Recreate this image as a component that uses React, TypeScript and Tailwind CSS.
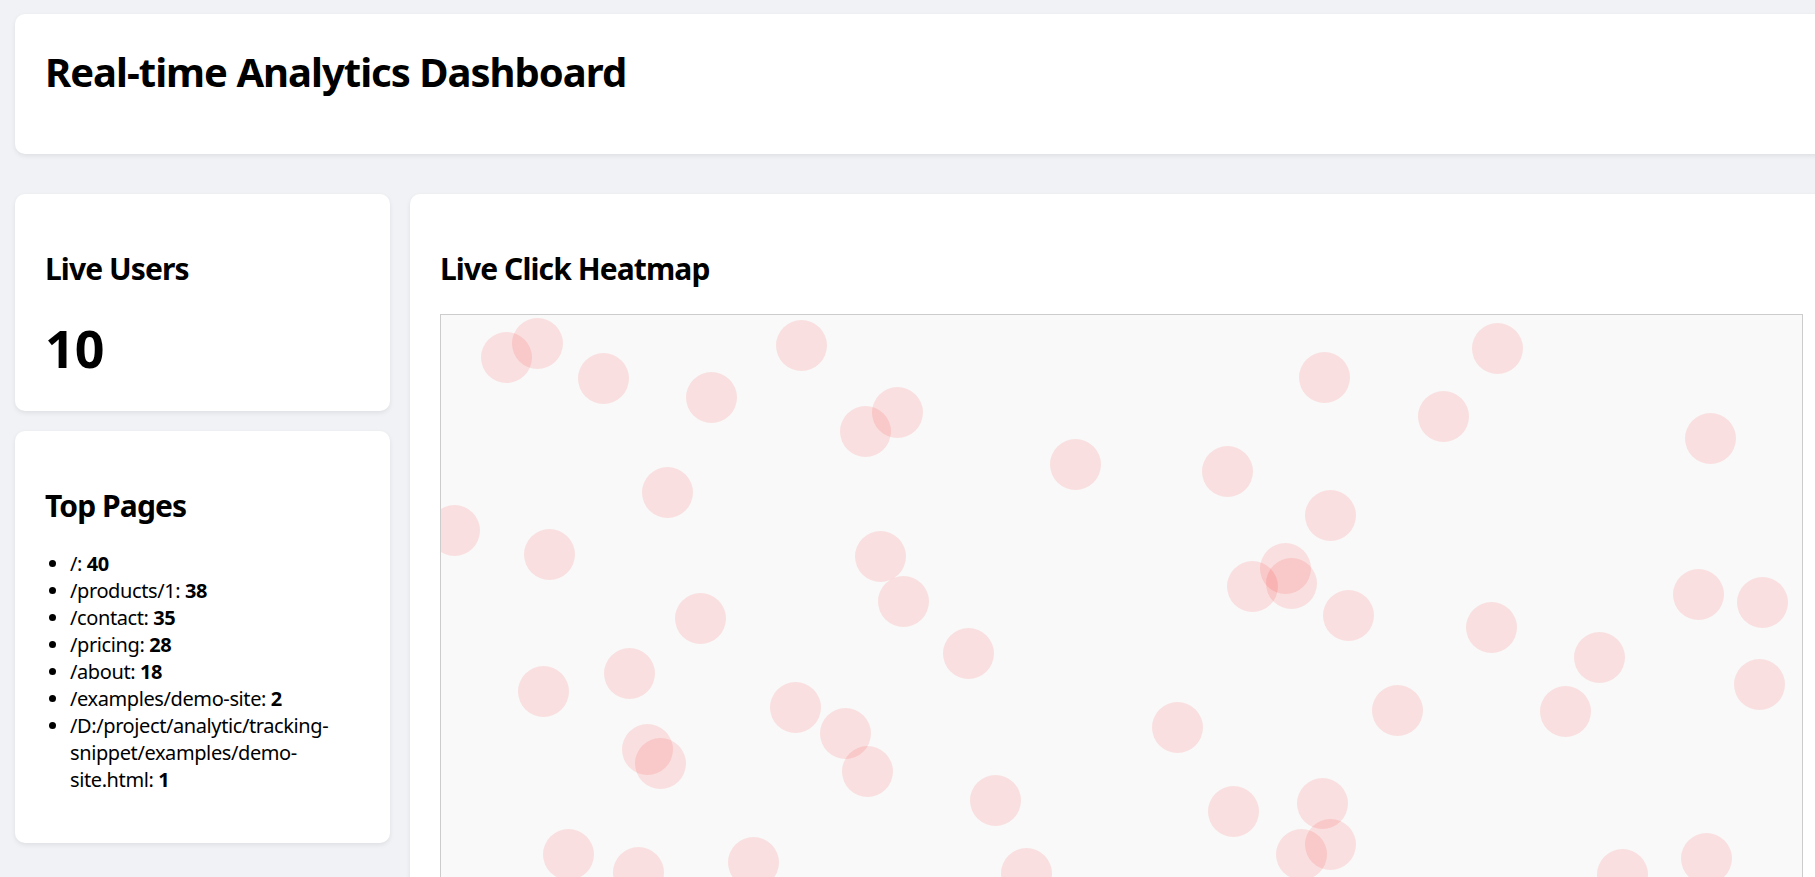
import React from "react";

const clicks: [number, number][] = [
  [65, 42], [96, 28], [162, 63], [270, 82], [360, 30], [424, 116], [456, 97],
  [226, 177], [634, 149], [786, 156], [883, 62], [1056, 33], [1002, 101], [1269, 123],
  [13, 215], [108, 239], [889, 200], [439, 241], [462, 286], [811, 271], [844, 253],
  [850, 268], [907, 300], [1050, 312], [1257, 279], [1321, 287], [259, 303], [527, 338],
  [188, 358], [102, 376], [1158, 342], [1318, 369], [354, 392], [404, 418], [736, 412],
  [956, 395], [1124, 396], [206, 434], [219, 448], [426, 456], [554, 485], [792, 496],
  [881, 488], [889, 529], [860, 539], [127, 539], [197, 557], [312, 547], [585, 558],
  [1181, 559], [1265, 543], [982, 587],
];

const topPages: { path: string; count: number }[] = [
  { path: "/", count: 40 },
  { path: "/products/1", count: 38 },
  { path: "/contact", count: 35 },
  { path: "/pricing", count: 28 },
  { path: "/about", count: 18 },
  { path: "/examples/demo-site", count: 2 },
  { path: "/D:/project/analytic/tracking-snippet/examples/demo-site.html", count: 1 },
];

function Card({ className = "", children }: { className?: string; children: React.ReactNode }) {
  return (
    <div className={"bg-white rounded-[10px] shadow-[0_2px_5px_rgba(0,0,0,0.08)] " + className}>
      {children}
    </div>
  );
}

function CardTitle({ children }: { children: React.ReactNode }) {
  return <h2 className="text-[30px] leading-[40px] font-bold tracking-[-0.03em]">{children}</h2>;
}

export default function App() {
  return (
    <div
      className="w-screen h-screen overflow-hidden bg-[#f0f2f5] text-black"
      style={{ fontFamily: '"Segoe UI", "Noto Sans", sans-serif' }}
    >
      <div className="w-[1848px] pl-[15px] pt-[14px] pr-[15px]">
        {/* Header */}
        <Card className="h-[140px] px-[30px] pt-[31px]">
          <h1 className="text-[40px] leading-[54px] font-bold tracking-[-0.025em]">
            Real-time Analytics Dashboard
          </h1>
        </Card>

        <div className="flex gap-[20px] mt-[40px] items-start">
          {/* Sidebar */}
          <div className="w-[375px] shrink-0 flex flex-col gap-[20px]">
            <Card className="h-[217px] px-[30px] pt-[55px]">
              <CardTitle>Live Users</CardTitle>
              <div className="mt-[29px] text-[52px] leading-[60px] font-bold">10</div>
            </Card>

            <Card className="h-[412px] px-[30px] pt-[55px]">
              <CardTitle>Top Pages</CardTitle>
              <ul className="mt-[24px] list-disc pl-[25px] text-[20px] leading-[27px] tracking-[-0.02em]">
                {topPages.map((p) => (
                  <li key={p.path}>
                    {p.path}: <strong className="font-bold">{p.count}</strong>
                  </li>
                ))}
              </ul>
            </Card>
          </div>

          {/* Heatmap */}
          <Card className="flex-1 px-[30px] pt-[55px] pb-[30px]">
            <CardTitle>Live Click Heatmap</CardTitle>
            <div className="mt-[25px] relative w-[1363px] h-[640px] border border-[#cccccc] bg-[#f9f9f9] overflow-hidden">
              {clicks.map(([x, y], i) => (
                <div
                  key={i}
                  className="absolute w-[51px] h-[51px] rounded-full bg-[rgba(255,0,0,0.1)] blur-[0.5px]"
                  style={{ left: x - 25.5, top: y - 25.5 }}
                />
              ))}
            </div>
          </Card>
        </div>
      </div>
    </div>
  );
}
